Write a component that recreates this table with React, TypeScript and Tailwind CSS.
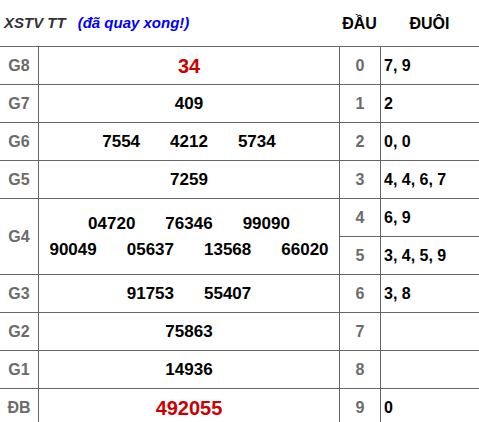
const prizes: { label: string; rows: string[][]; big?: boolean }[] = [
  { label: "G8", rows: [["34"]], big: true },
  { label: "G7", rows: [["409"]] },
  { label: "G6", rows: [["7554", "4212", "5734"]] },
  { label: "G5", rows: [["7259"]] },
  { label: "G4", rows: [["04720", "76346", "99090"], ["90049", "05637", "13568", "66020"]] },
  { label: "G3", rows: [["91753", "55407"]] },
  { label: "G2", rows: [["75863"]] },
  { label: "G1", rows: [["14936"]] },
  { label: "ĐB", rows: [["492055"]], big: true },
];

const tails = ["7, 9", "2", "0, 0", "4, 4, 6, 7", "6, 9", "3, 4, 5, 9", "3, 8", "", "", "0"];

export default function App() {
  return (
    <div className="w-[479px] h-[422px] overflow-hidden bg-white font-['Liberation_Sans',Arial,sans-serif] font-bold">
      <div className="flex h-[46px] items-center pt-[1px]">
        <div className="w-[339px] pl-[4px] text-[15px] italic">
          <span className="text-[#333]">XSTV TT</span>
          <span className="ml-[12px] text-[#0000ff]">(đã quay xong!)</span>
        </div>
        <div className="w-[41px] text-center text-[16px] text-black">ĐẦU</div>
        <div className="flex-1 text-center text-[16px] text-black">ĐUÔI</div>
      </div>
      <div className="flex">
        <div className="w-[339px]">
          {prizes.map((p) => (
            <div
              key={p.label}
              className={`flex border-t border-[#666] ${p.rows.length > 1 ? "h-[76px]" : "h-[38px]"}`}
            >
              <div className="flex w-[39px] items-center justify-center border-r border-[#666] text-[16px] text-[#6b6b6b]">
                {p.label}
              </div>
              <div className="flex flex-1 flex-col items-center justify-center">
                {p.rows.map((r, i) => (
                  <div key={i} className="flex justify-center gap-[30px] leading-[26px]">
                    {r.map((n) => (
                      <span
                        key={n}
                        className={p.big ? "text-[20px] text-[#cc0000]" : "text-[17px] text-black"}
                      >
                        {n}
                      </span>
                    ))}
                  </div>
                ))}
              </div>
            </div>
          ))}
        </div>
        <div className="flex-1 border-l border-[#666]">
          {tails.map((t, i) => (
            <div key={i} className="flex h-[38px] border-t border-[#666]">
              <div className="flex w-[41px] items-center justify-center border-r border-[#666] text-[16px] text-[#6b6b6b]">
                {i}
              </div>
              <div className="flex flex-1 items-center pl-[3px] text-[16px] text-black">{t}</div>
            </div>
          ))}
        </div>
      </div>
    </div>
  );
}
